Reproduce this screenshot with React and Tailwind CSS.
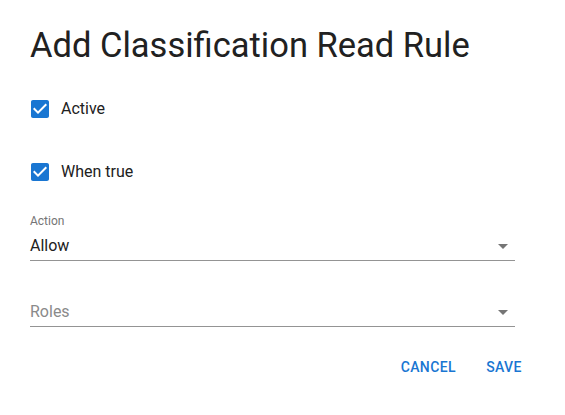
import React, { useState } from "react";

// Small checkbox glyph in the material style
const CheckIcon = ({ checked }) => (
  <svg viewBox="0 0 24 24" className="w-6 h-6 fill-[#1976d2]">
    {checked ? (
      <path d="M19 3H5c-1.11 0-2 .9-2 2v14c0 1.1.89 2 2 2h14c1.11 0 2-.9 2-2V5c0-1.1-.89-2-2-2zm-9 14l-5-5 1.41-1.41L10 14.17l7.59-7.59L19 8l-9 9z" />
    ) : (
      <path d="M19 5v14H5V5h14m0-2H5c-1.1 0-2 .9-2 2v14c0 1.1.9 2 2 2h14c1.1 0 2-.9 2-2V5c0-1.1-.9-2-2-2z" />
    )}
  </svg>
);

const ArrowDrop = () => (
  <svg viewBox="0 0 24 24" className="w-6 h-6 fill-[#757575]">
    <path d="M7 10l5 5 5-5z" />
  </svg>
);

const CheckRow = ({ label, checked, onToggle }) => (
  <label className="flex items-center h-[42px] -ml-[11px] cursor-pointer">
    <span className="p-[9px]" onClick={onToggle}>
      <CheckIcon checked={checked} />
    </span>
    <span className="text-base text-[#212121]">{label}</span>
  </label>
);

const App = () => {
  const [active, setActive] = useState(true);
  const [whenTrue, setWhenTrue] = useState(true);

  return (
    <div
      className="w-[565px] h-[415px] bg-white px-[30px] pt-6 flex flex-col"
      style={{ fontFamily: "Roboto, 'Liberation Sans', sans-serif" }}
    >
      <h1 className="text-[34.5px] leading-[42px] font-normal text-[#212121]">
        Add Classification Read Rule
      </h1>

      <div className="mt-[22px]">
        <CheckRow label="Active" checked={active} onToggle={() => setActive(!active)} />
      </div>
      <div className="mt-[21px]">
        <CheckRow label="When true" checked={whenTrue} onToggle={() => setWhenTrue(!whenTrue)} />
      </div>

      {/* Action select */}
      <div className="mt-[22px] w-[485px]">
        <div className="text-xs leading-none text-[#757575]">Action</div>
        <div className="mt-[7px] flex items-center justify-between border-b border-[#949494] pb-[2px]">
          <span className="text-base leading-6 text-[#212121]">Allow</span>
          <ArrowDrop />
        </div>
      </div>

      {/* Roles select */}
      <div className="mt-[39px] w-[485px]">
        <div className="flex items-center justify-between border-b border-[#949494] pb-[2px]">
          <span className="text-base leading-6 text-[#8a8a8a]">Roles</span>
          <ArrowDrop />
        </div>
      </div>

      <div className="mt-[22px] flex justify-end gap-2 -mr-[1px]">
        <button className="px-2 py-1.5 min-w-16 text-sm font-medium tracking-[0.4px] text-[#1976d2] uppercase leading-6">
          Cancel
        </button>
        <button className="px-2 py-1.5 min-w-16 text-sm font-medium tracking-[0.4px] text-[#1976d2] uppercase leading-6">
          Save
        </button>
      </div>
    </div>
  );
};

export default App;
